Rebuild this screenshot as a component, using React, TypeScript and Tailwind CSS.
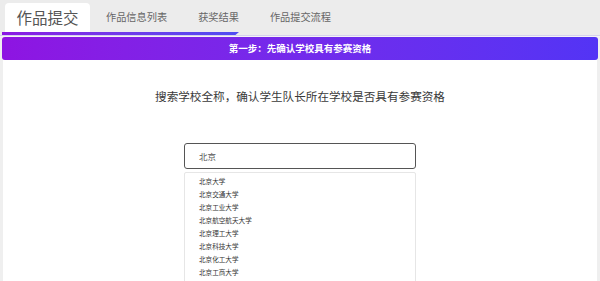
import React from "react";

const schools = [
  "北京大学",
  "北京交通大学",
  "北京工业大学",
  "北京航空航天大学",
  "北京理工大学",
  "北京科技大学",
  "北京化工大学",
  "北京工商大学",
];

export default function App() {
  return (
    <div
      className="w-[600px] h-[281px] overflow-hidden bg-[#efefef] flex flex-col"
      style={{ fontFamily: '"Noto Sans CJK SC", "Noto Sans", sans-serif' }}
    >
      <div className="shrink-0 flex items-end h-[32px] pl-[5px] bg-[#ececec]">
        <div className="h-[29px] w-[85px] bg-white rounded-t-[4px] flex items-center justify-center text-[15.5px] text-[#555] leading-none">
          作品提交
        </div>
        <div className="flex gap-[31px] ml-[16px] h-[29px] items-center text-[10.2px] text-[#666] leading-none">
          <span>作品信息列表</span>
          <span>获奖结果</span>
          <span>作品提交流程</span>
        </div>
      </div>
      <div className="shrink-0 h-[3px] bg-[#ececec] pl-[2px]">
        <div className="h-[3px] w-[237px] bg-gradient-to-r from-[#8a16e3] to-[#4f4cf2] [clip-path:polygon(0_0,100%_0,98.5%_100%,0_100%)]" />
      </div>
      <div className="shrink-0 h-[1px] bg-[#d6d1ee]" />
      <div className="shrink-0 h-[1px] bg-[#f4f4f4]" />
      <div className="shrink-0 mx-[2px] h-[23px] rounded-[3px] bg-gradient-to-r from-[#8e14e2] to-[#5334f5] flex items-center justify-center text-white font-bold text-[9.5px] leading-none">
        第一步：先确认学校具有参赛资格
      </div>
      <div className="shrink-0 grow mx-[3px] bg-white flex flex-col items-center">
        <div className="shrink-0 mt-[29px] text-[11.6px] text-[#3a3a3a] leading-[14px]">
          搜索学校全称，确认学生队长所在学校是否具有参赛资格
        </div>
        <div className="shrink-0 mt-[40px] w-[232px] h-[26px] border border-[#555] rounded-[3px] flex items-center pl-[14px] text-[8.5px] text-[#555]">
          北京
        </div>
        <div className="shrink-0 mt-[3px] w-[232px] border border-[#e6e6e6] rounded-[2px] pt-[2px] pb-[12px] flex flex-col">
          {schools.map((s) => (
            <div key={s} className="shrink-0 h-[13px] flex items-center pl-[14px] text-[6.6px] text-[#333] leading-none">
              {s}
            </div>
          ))}
        </div>
      </div>
    </div>
  );
}
